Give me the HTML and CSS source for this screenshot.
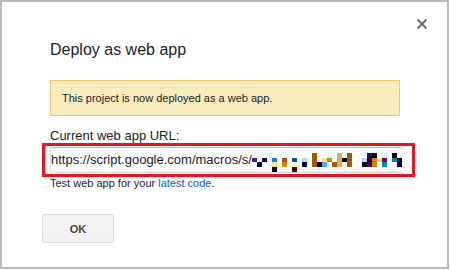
FILE: index.html
```html
<!DOCTYPE html>
<html lang="en">
<head>
    <meta charset="UTF-8">
    <title>Deploy as web app</title>
    <link rel="stylesheet" href="styles.css">
</head>
<body>
    <div class="dialog">
        <button class="close-btn" title="Close">
            <svg width="12" height="12" viewBox="0 0 12 12">
                <path d="M1.5 1.5 L10.5 10.5 M10.5 1.5 L1.5 10.5" stroke="#777" stroke-width="2.3" fill="none"/>
            </svg>
        </button>

        <h1 class="title">Deploy as web app</h1>

        <div class="notice">This project is now deployed as a web app.</div>

        <div class="label">Current web app URL:</div>
        <div class="highlight">
            <div class="url-field">
                <span>https://script.google.com/macros/s/</span>
                <!-- blurred part of the url -->
                <svg class="blur" width="150" height="19" viewBox="0 0 150 19" shape-rendering="crispEdges">
                    <rect x="0" y="4.7" width="5" height="4.7" fill="#4b1a8a"/>
                    <rect x="5" y="9.3" width="5" height="4.7" fill="#000066"/>
                    <rect x="10" y="4.7" width="5" height="4.7" fill="#000066"/>
                    <rect x="15" y="0" width="5" height="4.7" fill="#ccffff"/>
                    <rect x="20" y="4.7" width="5" height="4.7" fill="#0088cc"/>
                    <rect x="20" y="9.3" width="5" height="4.7" fill="#ffdd99"/>
                    <rect x="20" y="14" width="5" height="4.7" fill="#000000"/>
                    <rect x="30" y="4.7" width="5" height="4.7" fill="#aa5500"/>
                    <rect x="30" y="9.3" width="5" height="4.7" fill="#cc8800"/>
                    <rect x="40" y="4.7" width="5" height="4.7" fill="#0055aa"/>
                    <rect x="40" y="9.3" width="5" height="4.7" fill="#ffffcc"/>
                    <rect x="40" y="14" width="5" height="4.7" fill="#550000"/>
                    <rect x="50" y="4.7" width="5" height="4.7" fill="#aaddff"/>
                    <rect x="50" y="9.3" width="5" height="4.7" fill="#000066"/>
                    <rect x="60" y="0" width="5" height="14" fill="#aa5500"/>
                    <rect x="65" y="9.3" width="5" height="4.7" fill="#000000"/>
                    <rect x="65" y="14" width="5" height="4.7" fill="#ccffff"/>
                    <rect x="70" y="4.7" width="5" height="4.7" fill="#ffdd99"/>
                    <rect x="70" y="9.3" width="5" height="4.7" fill="#55aaee"/>
                    <rect x="75" y="0" width="5" height="4.7" fill="#ccffff"/>
                    <rect x="75" y="4.7" width="5" height="4.7" fill="#cc8800"/>
                    <rect x="80" y="4.7" width="5" height="4.7" fill="#ddffff"/>
                    <rect x="80" y="9.3" width="5" height="4.7" fill="#aa5500"/>
                    <rect x="85" y="0" width="5" height="14" fill="#ddaa66"/>
                    <rect x="90" y="4.7" width="5" height="4.7" fill="#000000"/>
                    <rect x="95" y="0" width="5" height="14" fill="#aa5500"/>
                    <rect x="110" y="4.7" width="5" height="4.7" fill="#aaddff"/>
                    <rect x="110" y="9.3" width="5" height="4.7" fill="#000000"/>
                    <rect x="115" y="0" width="5" height="4.7" fill="#440066"/>
                    <rect x="115" y="4.7" width="5" height="4.7" fill="#220033"/>
                    <rect x="115" y="9.3" width="5" height="4.7" fill="#550066"/>
                    <rect x="120" y="0" width="5" height="4.7" fill="#000000"/>
                    <rect x="120" y="4.7" width="5" height="9.3" fill="#cc8800"/>
                    <rect x="125" y="4.7" width="5" height="4.7" fill="#ffddaa"/>
                    <rect x="130" y="0" width="5" height="4.7" fill="#ccffff"/>
                    <rect x="130" y="4.7" width="5" height="4.7" fill="#880055"/>
                    <rect x="130" y="9.3" width="5" height="4.7" fill="#0088cc"/>
                    <rect x="140" y="0" width="5" height="4.7" fill="#000000"/>
                    <rect x="140" y="4.7" width="5" height="4.7" fill="#0088cc"/>
                    <rect x="145" y="4.7" width="5" height="4.7" fill="#000000"/>
                    <rect x="145" y="9.3" width="5" height="4.7" fill="#000066"/>
                </svg>
            </div>
        </div>
        <div class="hint">Test web app for your <a href="#">latest code</a>.</div>

        <button class="ok-btn">OK</button>
    </div>
</body>
</html>
```

FILE: styles.css
```css
body {
    margin: 0;
    background: #fff;
    font-family: "Liberation Sans", Arial, sans-serif;
    color: #222;
}
.dialog {
    position: relative;
    box-sizing: border-box;
    width: 449px;
    height: 269px;
    padding: 39px 0 0 48px;
    border: 2px solid #b9b9b9;
    background: #fff;
}
.close-btn {
    position: absolute;
    top: 16px;
    right: 19px;
    width: 12px;
    height: 12px;
    padding: 0;
    border: none;
    background: none;
    cursor: pointer;
}
.close-btn svg {
    display: block;
}
.title {
    margin: 0;
    font-size: 16px;
    font-weight: normal;
    line-height: 18px;
    color: #222;
}
.notice {
    box-sizing: border-box;
    width: 350px;
    height: 36px;
    margin-top: 21px;
    padding: 11px 11px 0;
    border: 1px solid #f0c36d;
    background: #f9edbe;
    font-size: 11px;
    line-height: 13px;
}
.label {
    margin-top: 12px;
    font-size: 13px;
    line-height: 15px;
}
.highlight {
    width: max-content;
    margin-left: -8px;
    padding: 1px 10px 1px 5px;
    border: 3px solid #e3151e;
}
.url-field {
    display: flex;
    align-items: flex-start;
    box-sizing: border-box;
    width: 352px;
    height: 26px;
    border: 1px solid #d9d9d9;
    border-top-color: #c0c0c0;
    border-right: 0;
    font-size: 13px;
    line-height: 24px;
    white-space: nowrap;
    overflow: hidden;
}
.url-field .blur {
    flex: none;
    margin-top: 5px;
}
.hint {
    font-size: 11px;
    line-height: 13px;
}
.hint a {
    color: #15c;
    text-decoration: none;
}
.ok-btn {
    display: block;
    min-width: 72px;
    height: 29px;
    margin: 24px 0 0 -8px;
    padding: 0 8px;
    border: 1px solid #dcdcdc;
    border-radius: 2px;
    background: linear-gradient(#f5f5f5, #f1f1f1);
    color: #444;
    font-family: inherit;
    font-size: 11px;
    font-weight: bold;
}
```
